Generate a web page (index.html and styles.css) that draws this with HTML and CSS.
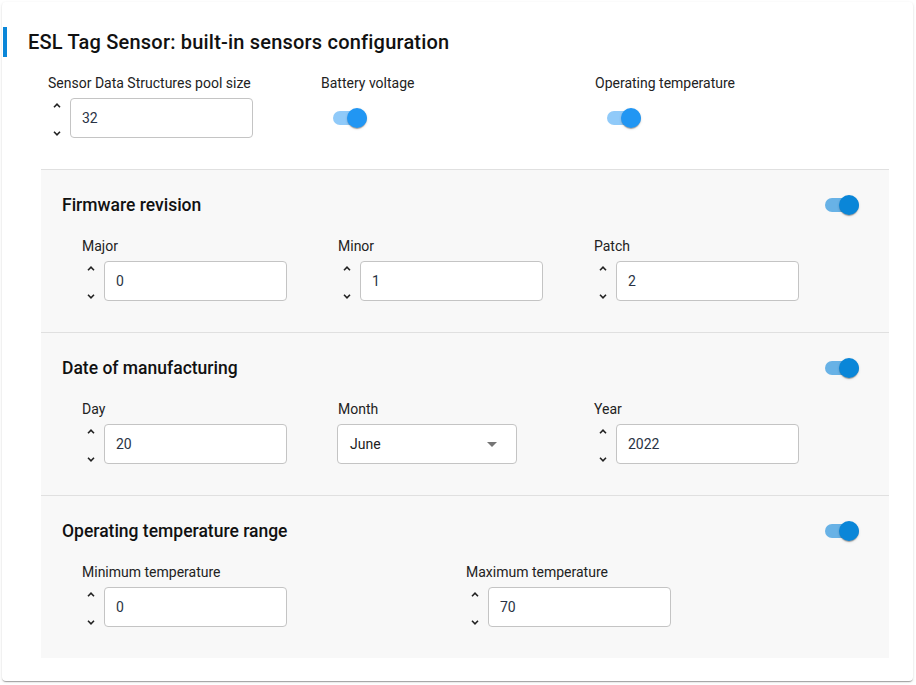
FILE: index.html
```html
<!DOCTYPE html>
<html>
<head>
<meta charset="utf-8">
<link rel="stylesheet" href="styles.css">
</head>
<body>
<div class="card">
  <div class="header"><h1 class="title">ESL Tag Sensor: built-in sensors configuration</h1></div>

  <div class="top-row">
    <div class="field">
      <label class="label">Sensor Data Structures pool size</label>
      <div class="num">
        <div class="spin">
          <svg width="8" height="5" viewBox="0 0 8 5"><path d="M1 4.2 L4 1.2 L7 4.2" fill="none" stroke="#222" stroke-width="1.6"/></svg>
          <svg width="8" height="5" viewBox="0 0 8 5"><path d="M1 0.8 L4 3.8 L7 0.8" fill="none" stroke="#222" stroke-width="1.6"/></svg>
        </div>
        <div class="box">32</div>
      </div>
    </div>
    <div class="field">
      <label class="label">Battery voltage</label>
      <div class="switch-row"><span class="switch"><span class="track"></span><span class="thumb"></span></span></div>
    </div>
    <div class="field">
      <label class="label">Operating temperature</label>
      <div class="switch-row"><span class="switch"><span class="track"></span><span class="thumb"></span></span></div>
    </div>
  </div>

  <div class="sections">
    <section class="section">
      <div class="sec-head">
        <h2 class="sec-title">Firmware revision</h2>
        <span class="switch dark"><span class="track"></span><span class="thumb"></span></span>
      </div>
      <div class="grid3">
        <div class="field">
          <label class="label">Major</label>
          <div class="num">
            <div class="spin">
              <svg width="8" height="5" viewBox="0 0 8 5"><path d="M1 4.2 L4 1.2 L7 4.2" fill="none" stroke="#222" stroke-width="1.6"/></svg>
              <svg width="8" height="5" viewBox="0 0 8 5"><path d="M1 0.8 L4 3.8 L7 0.8" fill="none" stroke="#222" stroke-width="1.6"/></svg>
            </div>
            <div class="box">0</div>
          </div>
        </div>
        <div class="field">
          <label class="label">Minor</label>
          <div class="num">
            <div class="spin">
              <svg width="8" height="5" viewBox="0 0 8 5"><path d="M1 4.2 L4 1.2 L7 4.2" fill="none" stroke="#222" stroke-width="1.6"/></svg>
              <svg width="8" height="5" viewBox="0 0 8 5"><path d="M1 0.8 L4 3.8 L7 0.8" fill="none" stroke="#222" stroke-width="1.6"/></svg>
            </div>
            <div class="box">1</div>
          </div>
        </div>
        <div class="field">
          <label class="label">Patch</label>
          <div class="num">
            <div class="spin">
              <svg width="8" height="5" viewBox="0 0 8 5"><path d="M1 4.2 L4 1.2 L7 4.2" fill="none" stroke="#222" stroke-width="1.6"/></svg>
              <svg width="8" height="5" viewBox="0 0 8 5"><path d="M1 0.8 L4 3.8 L7 0.8" fill="none" stroke="#222" stroke-width="1.6"/></svg>
            </div>
            <div class="box">2</div>
          </div>
        </div>
      </div>
    </section>

    <section class="section">
      <div class="sec-head">
        <h2 class="sec-title">Date of manufacturing</h2>
        <span class="switch dark"><span class="track"></span><span class="thumb"></span></span>
      </div>
      <div class="grid3">
        <div class="field">
          <label class="label">Day</label>
          <div class="num">
            <div class="spin">
              <svg width="8" height="5" viewBox="0 0 8 5"><path d="M1 4.2 L4 1.2 L7 4.2" fill="none" stroke="#222" stroke-width="1.6"/></svg>
              <svg width="8" height="5" viewBox="0 0 8 5"><path d="M1 0.8 L4 3.8 L7 0.8" fill="none" stroke="#222" stroke-width="1.6"/></svg>
            </div>
            <div class="box">20</div>
          </div>
        </div>
        <div class="field">
          <label class="label">Month</label>
          <div class="select">
            <span>June</span>
            <svg width="10" height="5" viewBox="0 0 10 5"><path d="M0 0 L10 0 L5 5 Z" fill="#757575"/></svg>
          </div>
        </div>
        <div class="field">
          <label class="label">Year</label>
          <div class="num">
            <div class="spin">
              <svg width="8" height="5" viewBox="0 0 8 5"><path d="M1 4.2 L4 1.2 L7 4.2" fill="none" stroke="#222" stroke-width="1.6"/></svg>
              <svg width="8" height="5" viewBox="0 0 8 5"><path d="M1 0.8 L4 3.8 L7 0.8" fill="none" stroke="#222" stroke-width="1.6"/></svg>
            </div>
            <div class="box">2022</div>
          </div>
        </div>
      </div>
    </section>

    <section class="section">
      <div class="sec-head">
        <h2 class="sec-title">Operating temperature range</h2>
        <span class="switch dark"><span class="track"></span><span class="thumb"></span></span>
      </div>
      <div class="grid2">
        <div class="field">
          <label class="label">Minimum temperature</label>
          <div class="num">
            <div class="spin">
              <svg width="8" height="5" viewBox="0 0 8 5"><path d="M1 4.2 L4 1.2 L7 4.2" fill="none" stroke="#222" stroke-width="1.6"/></svg>
              <svg width="8" height="5" viewBox="0 0 8 5"><path d="M1 0.8 L4 3.8 L7 0.8" fill="none" stroke="#222" stroke-width="1.6"/></svg>
            </div>
            <div class="box">0</div>
          </div>
        </div>
        <div class="field">
          <label class="label">Maximum temperature</label>
          <div class="num">
            <div class="spin">
              <svg width="8" height="5" viewBox="0 0 8 5"><path d="M1 4.2 L4 1.2 L7 4.2" fill="none" stroke="#222" stroke-width="1.6"/></svg>
              <svg width="8" height="5" viewBox="0 0 8 5"><path d="M1 0.8 L4 3.8 L7 0.8" fill="none" stroke="#222" stroke-width="1.6"/></svg>
            </div>
            <div class="box">70</div>
          </div>
        </div>
      </div>
    </section>
  </div>
</div>
</body>
</html>
```

FILE: styles.css
```css
* { box-sizing: border-box; }
html, body { margin: 0; padding: 0; background: #fff; }
body {
  font-family: Roboto, "Liberation Sans", sans-serif;
  color: rgba(0,0,0,0.87);
  width: 916px;
  height: 685px;
  overflow: hidden;
}
.card {
  margin: 2px;
  width: 911px;
  height: 679px;
  background: #fff;
  border-radius: 4px;
  box-shadow: 0 2px 1px -1px rgba(0,0,0,.2), 0 1px 1px 0 rgba(0,0,0,.14), 0 1px 3px 0 rgba(0,0,0,.12);
  padding-top: 25px;
}
.header {
  margin-left: 1px;
  height: 30px;
  border-left: 4px solid #0a86d8;
  padding-left: 21px;
  display: flex;
  align-items: center;
}
.title {
  margin: 0;
  font-size: 20px;
  font-weight: 500;
  color: #111;
  letter-spacing: 0.2px;
}
.top-row {
  margin-top: 16px;
  padding-left: 46px;
  display: grid;
  grid-template-columns: 273px 274px 273px;
}
.field { display: flex; flex-direction: column; }
.label {
  font-size: 14px;
  line-height: 20px;
  height: 20px;
  margin-bottom: 5px;
  color: #222;
}
.num { display: flex; align-items: stretch; height: 40px; }
.spin {
  width: 22px;
  display: flex;
  flex-direction: column;
  justify-content: space-between;
  align-items: center;
  padding: 5px 4px 2px 0;
}
.spin svg { display: block; }
.box {
  width: 183px;
  height: 40px;
  background: #fff;
  border: 1px solid #c4c4c4;
  border-radius: 4px;
  padding-left: 11px;
  display: flex;
  align-items: center;
  font-size: 14px;
  color: #2a3344;
}
.select {
  width: 180px;
  height: 40px;
  margin-left: -1px;
  background: #fff;
  border: 1px solid #c4c4c4;
  border-radius: 4px;
  padding: 0 19px 0 12px;
  display: flex;
  align-items: center;
  justify-content: space-between;
  font-size: 14px;
  color: #222;
}
.switch-row { height: 40px; display: flex; align-items: center; padding-left: 12px; }
.switch { position: relative; display: inline-block; width: 34px; height: 20px; }
.switch .track {
  position: absolute; left: 0; top: 3px;
  width: 34px; height: 14px; border-radius: 7px;
  background: #90caf9;
}
.switch .thumb {
  position: absolute; left: 14px; top: 0;
  width: 20px; height: 20px; border-radius: 50%;
  background: #2196f3;
  box-shadow: 0 2px 1px -1px rgba(0,0,0,.2), 0 1px 1px 0 rgba(0,0,0,.14), 0 1px 3px 0 rgba(0,0,0,.12);
}
.switch.dark { margin-right: -1px; }
.switch.dark .track { background: #68b2e6; }
.switch.dark .thumb { background: #0a86d8; }
.sections {
  margin: 31px 0 0 39px;
  width: 848px;
}
.section {
  background: #f8f8f8;
  border-top: 1px solid #e0e0e0;
  padding: 23px 31px 31px 21px;
}
.sec-head {
  display: flex;
  justify-content: space-between;
  align-items: center;
  height: 24px;
  margin-bottom: 19px;
}
.sec-title {
  margin: 0;
  font-size: 17.5px;
  font-weight: 500;
  color: #111;
}
.grid3 {
  padding-left: 20px;
  display: grid;
  grid-template-columns: 256px 256px 256px;
}
.grid2 {
  padding-left: 20px;
  display: grid;
  grid-template-columns: 384px 384px;
}
```
